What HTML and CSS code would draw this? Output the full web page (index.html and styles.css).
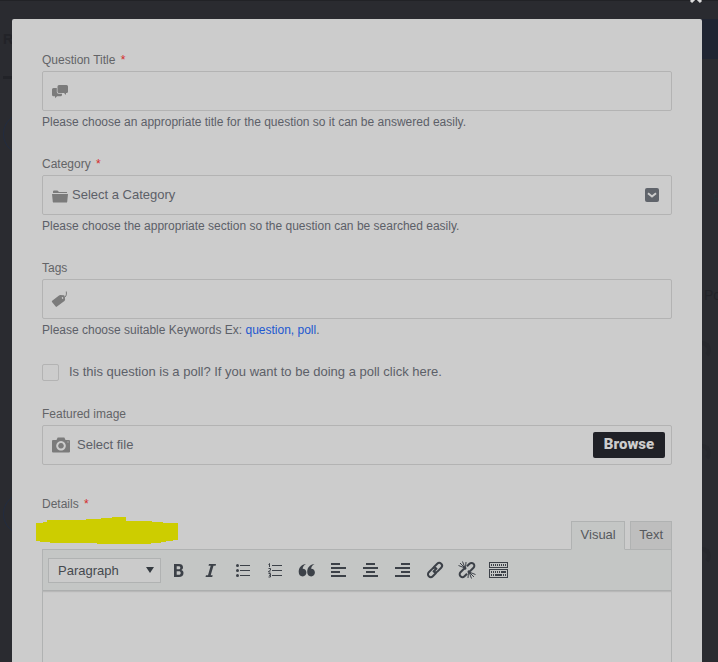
FILE: index.html
```html
<!DOCTYPE html>
<html lang="en">
<head>
<meta charset="utf-8">
<meta name="viewport" content="width=device-width, initial-scale=1">
<title>Ask a question</title>
<link rel="stylesheet" href="styles.css">
</head>
<body>
<div class="backdrop" aria-hidden="true">
  <span class="ghost-heading">R</span>
  <span class="ghost-rule"></span>
  <span class="ghost-avatar ghost-avatar-first"></span>
  <span class="ghost-avatar ghost-avatar-second"></span>
  <span class="ghost-button"></span>
  <span class="ghost-link">E</span>
  <span class="ghost-tab">Po</span>
  <span class="ghost-curve ghost-curve-a"></span>
  <span class="ghost-curve ghost-curve-b"></span>
  <span class="ghost-curve ghost-curve-c"></span>
</div>
<button class="close" type="button" aria-label="Close"><svg width="14" height="14" viewBox="0 0 14 14"><path d="M2 2l10 10M12 2L2 12"/></svg></button>
<main class="modal">
  <form class="form">
    <div class="field">
      <label class="label" for="title">Question Title <span class="required">*</span></label>
      <div class="control">
        <svg class="icon" width="18" height="18" viewBox="0 0 18 18"><path d="M8 3h7.500A1.500 1.500 0 0 1 17 4.500v5a1.500 1.500 0 0 1-1.500 1.500H15v2l-2-2H8a1.500 1.500 0 0 1-1.500-1.500v-5A1.500 1.500 0 0 1 8 3z"/><path d="M1 7.500A1.500 1.500 0 0 1 2.500 6H5.800v4a1.800 1.800 0 0 0 1.800 1.800H11v1a1.500 1.500 0 0 1-1.500 1.500H6L4 16.300v-2H2.500A1.500 1.500 0 0 1 1 12.800z"/></svg>
        <input class="input" id="title" type="text">
      </div>
      <p class="help">Please choose an appropriate title for the question so it can be answered easily.</p>
    </div>
    <div class="field">
      <label class="label" for="category">Category <span class="required">*</span></label>
      <div class="control">
        <svg class="icon" width="18" height="18" viewBox="0 0 18 18"><path d="M2 7V5.500a1 1 0 0 1 1-1h3.500L8 6h8v1zM1 8h16l-.8 8a.8.8 0 0 1-.8.500H2.600a.8.8 0 0 1-.8-.5z"/></svg>
        <select class="input category" id="category"><option>Select a Category</option></select>
        <svg class="chevron" width="14" height="14" viewBox="0 0 14 14"><rect width="14" height="14" rx="2"/><path d="M3 5.200L7 8.500l4-3.300"/></svg>
      </div>
      <p class="help">Please choose the appropriate section so the question can be searched easily.</p>
    </div>
    <div class="field">
      <label class="label" for="tags">Tags</label>
      <div class="control">
        <svg class="icon" width="18" height="18" viewBox="0 0 18 18"><path fill-rule="evenodd" d="M1.200 10.800L8 5.500a2 2 0 0 1 1.200-.4l3.500.2a1 1 0 0 1 .9.800l.5 3.400a2 2 0 0 1-.7 1.500L6 16.600a.9.900 0 0 1-1.300-.1L1 12a.9.900 0 0 1 .2-1.200zM11.600 7a.9.900 0 1 0 .1 0z"/><path class="string" d="M12 8c2.500-.5 4-2.500 3.300-6.500"/></svg>
        <input class="input" id="tags" type="text">
      </div>
      <p class="help">Please choose suitable Keywords Ex: <a href="#">question, poll</a>.</p>
    </div>
    <div class="poll">
      <input class="checkbox" id="poll" type="checkbox">
      <label class="poll-label" for="poll">Is this question is a poll? If you want to be doing a poll click here.</label>
    </div>
    <div class="field field-image">
      <label class="label" for="image">Featured image</label>
      <div class="control">
        <svg class="icon" width="20" height="18" viewBox="0 0 20 18"><path fill-rule="evenodd" d="M2 4h3.500l1.200-2.500h6.600L14.500 4H18a1 1 0 0 1 1 1v10.500a1 1 0 0 1-1 1H2a1 1 0 0 1-1-1V5a1 1 0 0 1 1-1zm8 1a4.800 4.800 0 1 0 .01 0zm0 2a2.800 2.800 0 1 1-.01 0zm6.500-1.500v1h1v-1z"/></svg>
        <label class="file-name" for="image">Select file</label>
        <input class="file-input" id="image" type="file">
        <button class="browse" type="button">Browse</button>
      </div>
    </div>
    <div class="editor">
      <label class="label" for="details">Details <span class="required">*</span></label>
      <svg class="marker" width="142" height="27" viewBox="0 0 142 27" aria-hidden="true"><path d="M0 6h7V5h4V3h39V2h15V1h11V0h14v4h26v1h11v1h15v17h-5v1h-7v1h-5v1h-10v1H61v-1H14v-1H4v-1H0z"/></svg>
      <div class="tabs">
        <button class="tab tab-active" type="button">Visual</button>
        <button class="tab" type="button">Text</button>
      </div>
      <div class="panel">
        <div class="toolbar">
          <div class="format">
            <select class="format-select" aria-label="Format"><option>Paragraph</option></select>
            <svg class="format-arrow" width="8" height="6" viewBox="0 0 8 6"><path d="M0 0h8L4 6z"/></svg>
          </div>
          <div class="tools">
            <button class="tool" type="button" aria-label="Bold"><svg width="20" height="20" viewBox="0 0 20 20"><path fill-rule="evenodd" d="M5 4h5c2.700 0 4 1.200 4 3.300 0 1.300-.6 2.200-1.700 2.700 1.500.4 2.200 1.400 2.200 3 0 2.500-1.700 4-4.500 4H5zm2.700 2.200v3h1.900c1.200 0 1.700-.5 1.700-1.500s-.5-1.500-1.700-1.500zm0 5v3.500h2.200c1.200 0 1.800-.6 1.800-1.800 0-1.100-.6-1.700-1.800-1.700z"/></svg></button>
            <button class="tool" type="button" aria-label="Italic"><svg width="20" height="20" viewBox="0 0 20 20"><path d="M8 4h7l-.4 1.800h-2.100L9.700 15.200h2l-.5 1.800H4.500l.5-1.800h2L9.700 5.800H7.500z"/></svg></button>
            <button class="tool" type="button" aria-label="Bulleted list"><svg width="20" height="20" viewBox="0 0 20 20"><path d="M7 5h10v1H7zm0 5h10v1H7zm0 5h10v1H7z"/><circle cx="4.500" cy="5.500" r="1.500"/><circle cx="4.500" cy="10.500" r="1.500"/><circle cx="4.500" cy="15.500" r="1.500"/></svg></button>
            <button class="tool" type="button" aria-label="Numbered list"><svg width="20" height="20" viewBox="0 0 20 20"><path d="M7 5h10v1H7zm0 5h10v1H7zm0 5h10v1H7z"/><path class="thin" d="M3.500 4.500l1-1V7M3.500 8.500h2v1.700l-2 1.300v.5h2M3.500 13.500h2v1.800H4.300h1.200v1.700h-2"/></svg></button>
            <button class="tool" type="button" aria-label="Blockquote"><svg width="20" height="20" viewBox="0 0 20 20"><path d="M9 4C6.700 5.200 5.700 7 5.700 8.800c2.200 0 3.700 1.500 3.700 3.700 0 2.300-1.600 3.900-3.700 3.900-2.500 0-4-1.800-4-4.700C1.700 7.600 4.600 4.300 9 4zM17.500 4c-2.300 1.200-3.300 3-3.300 4.800 2.200 0 3.700 1.500 3.700 3.700 0 2.300-1.600 3.900-3.700 3.900-2.500 0-4-1.800-4-4.700 0-4.100 2.900-7.400 7.300-7.700z"/></svg></button>
            <button class="tool" type="button" aria-label="Align left"><svg width="20" height="20" viewBox="0 0 20 20"><path d="M2 3h9v2H2zm0 4h15v2H2zm0 4h9v2H2zm0 4h15v2H2z"/></svg></button>
            <button class="tool" type="button" aria-label="Align center"><svg width="20" height="20" viewBox="0 0 20 20"><path d="M5 3h9v2H5zM2 7h15v2H2zm3 4h9v2H5zm-3 4h15v2H2z"/></svg></button>
            <button class="tool" type="button" aria-label="Align right"><svg width="20" height="20" viewBox="0 0 20 20"><path d="M8 3h9v2H8zM2 7h15v2H2zm6 4h9v2H8zm-6 4h15v2H2z"/></svg></button>
            <button class="tool" type="button" aria-label="Insert link"><svg class="stroked" width="20" height="20" viewBox="0 0 20 20"><path d="M8.500 7.500l3.700-3.700a2.800 2.800 0 0 1 4 4l-3.600 3.600a2.800 2.800 0 0 1-3.600.4M11.500 12.500l-3.700 3.700a2.800 2.800 0 0 1-4-4l3.600-3.600a2.800 2.800 0 0 1 3.600-.4M8 12l4-4"/></svg></button>
            <button class="tool" type="button" aria-label="Remove link"><svg class="stroked" width="20" height="20" viewBox="0 0 20 20"><path d="M10 6.300l2.500-2.500a2.800 2.800 0 0 1 4 4l-3 3a2.800 2.800 0 0 1-2.800.5M10 13.700l-2.500 2.500a2.800 2.800 0 0 1-4-4l3-3a2.800 2.800 0 0 1 2.800-.5"/><path class="rays" d="M8 8L1.500 5.500M8 8L3 3M8 8L5.500 1.500M8.500 8L9 2M12 12l6.500 2.500M12 12l5 5M12 12l2.500 6.500M11.500 12l-.5 6"/></svg></button>
            <button class="tool" type="button" aria-label="Toolbar toggle"><svg width="20" height="20" viewBox="0 0 20 20"><path fill-rule="evenodd" d="M0 2h19v6H0zm1 1v4h17V3z"/><path class="keys" d="M2 5h15"/><path fill-rule="evenodd" d="M0 9h19v9H0zm1 1v7h17v-7z"/><path class="keys" d="M2 12h9M2 15h3M14 15h3"/><path d="M12 11h5v2h-5zM6 14h7v2H6z"/></svg></button>
          </div>
        </div>
        <textarea class="details" id="details"></textarea>
      </div>
    </div>
  </form>
</main>
</body>
</html>
```
FILE: styles.css
```css
* {
  box-sizing: border-box;
}

body {
  position: relative;
  height: 100vh;
  margin: 0;
  overflow: hidden;
  background: #2a2b30;
  color: #5c6068;
  font-family: "Liberation Sans", Arial, sans-serif;
  font-size: 12px;
}

button,
input,
select,
textarea {
  margin: 0;
  padding: 0;
  border: 0;
  border-radius: 0;
  background: none;
  color: inherit;
  font: inherit;
}

a {
  color: #2158d0;
  text-decoration: none;
}

/* Dimmed page behind the dialog */
.backdrop {
  position: absolute;
  inset: 0;
  overflow: hidden;
  border-top: 1px solid #212226;
  color: #222328;
  font-size: 14px;
}

.backdrop span {
  position: absolute;
}

.ghost-heading {
  top: 30px;
  left: 3px;
  font-weight: bold;
}

.ghost-rule {
  top: 75px;
  left: 3px;
  width: 40px;
  height: 3px;
  background: #222328;
}

.ghost-avatar {
  left: 3px;
  width: 42px;
  height: 42px;
  border: 1px solid #222b40;
  border-radius: 50%;
}

.ghost-avatar-first {
  top: 112px;
}

.ghost-avatar-second {
  top: 492px;
}

.ghost-button {
  top: 18px;
  right: 0;
  width: 40px;
  height: 40px;
  background: #202532;
}

.ghost-link {
  top: 190px;
  right: -4px;
  color: #243034;
}

.ghost-tab {
  top: 286px;
  right: -3px;
}

.ghost-curve {
  right: 7px;
  width: 18px;
  height: 18px;
  border: 4px solid transparent;
  border-top-color: #27282d;
  border-right-color: #27282d;
  border-radius: 50%;
}

.ghost-curve-a {
  top: 340px;
}

.ghost-curve-b {
  top: 443px;
}

.ghost-curve-c {
  top: 546px;
}

.close {
  position: absolute;
  top: -10px;
  right: 15px;
  height: 14px;
}

.close svg {
  display: block;
  fill: none;
  stroke: #ddd;
  stroke-width: 3;
}

.modal {
  position: relative;
  height: calc(100vh - 19px);
  margin: 19px 16px 0 12px;
  padding: 30px 30px 0;
  overflow: hidden;
  border-radius: 2px 2px 0 0;
  background: #ccc;
}

.form {
  display: flex;
  flex-direction: column;
  height: 100%;
}

.field {
  margin-bottom: 20px;
}

.field-image {
  margin-bottom: 28px;
}

.label {
  display: block;
  color: #636467;
  line-height: 22px;
}

.required {
  margin-left: 2px;
  color: #d52a2a;
}

.control {
  display: flex;
  align-items: center;
  position: relative;
  height: 40px;
  padding: 0 6px 0 8px;
  border: 1px solid #b3b3b3;
  border-radius: 2px;
}

.icon {
  flex: none;
  fill: #7b7b7b;
}

.string {
  fill: none;
  stroke: #7b7b7b;
}

.input {
  flex: 1;
  min-width: 0;
  height: 38px;
  padding: 0 3px 2px;
  outline: 0;
  appearance: none;
  font-size: 13px;
}

.chevron {
  position: absolute;
  right: 12px;
  fill: #60646b;
  pointer-events: none;
}

.chevron path {
  fill: none;
  stroke: #ccc;
  stroke-width: 2;
}

.help {
  margin: 0;
  line-height: 22px;
}

.poll {
  display: flex;
  align-items: center;
  gap: 10px;
  height: 22px;
  margin-bottom: 20px;
  font-size: 13px;
}

.poll-label {
  padding-bottom: 2px;
}

.checkbox {
  width: 17px;
  height: 17px;
  border: 1px solid #b3b3b3;
  border-radius: 2px;
  appearance: none;
}

.file-name {
  flex: 1;
  padding: 0 0 2px 6px;
  font-size: 13px;
}

.file-input {
  position: absolute;
  width: 1px;
  height: 1px;
  opacity: 0;
}

.browse {
  width: 72px;
  height: 26px;
  padding-bottom: 2px;
  border-radius: 2px;
  background: #202127;
  color: #ccc;
  font-family: Roboto, sans-serif;
  font-size: 15px;
  font-weight: 900;
}

.editor {
  display: flex;
  flex: 1;
  flex-direction: column;
  position: relative;
  min-height: 0;
}

.marker {
  position: absolute;
  top: 24px;
  left: -6px;
  fill: #cdcd00;
}

.tabs {
  display: flex;
  justify-content: flex-end;
  gap: 5px;
  position: relative;
  height: 29px;
  margin: 6px 0 -1px;
}

.tab {
  padding: 0 8px 2px;
  border: 1px solid #b0b2b2;
  background: #bebebe;
  color: #56595d;
  font-size: 13px;
}

.tab-active {
  min-width: 54px;
  border-bottom-color: #c4c6c5;
  background: #c4c6c5;
}

.panel {
  display: flex;
  flex: 1;
  flex-direction: column;
  min-height: 0;
  border: 1px solid #b0b2b2;
  border-bottom: 0;
}

.toolbar {
  display: flex;
  flex: none;
  align-items: center;
  gap: 4px;
  height: 41px;
  padding: 0 5px;
  border-bottom: 1px solid #acaeae;
  background: #c4c6c5;
  box-shadow: 0 1px 1px #b8b8b8;
}

.format {
  display: flex;
  align-items: center;
  position: relative;
}

.format-select {
  width: 113px;
  height: 25px;
  padding: 0 9px;
  border: 1px solid #b0b2b2;
  background: #cbcbcb;
  color: #45494e;
  appearance: none;
  font-size: 13px;
}

.format-arrow {
  position: absolute;
  right: 7px;
  fill: #353a40;
  pointer-events: none;
}

.tools {
  display: flex;
  gap: 4px;
}

.tool {
  display: grid;
  place-items: center;
  width: 28px;
  height: 28px;
}

.tool svg {
  fill: #3c4148;
}

.tool .thin {
  fill: none;
  stroke: #3c4148;
}

.tool .stroked {
  fill: none;
  stroke: #3c4148;
  stroke-width: 2;
}

.tool .rays {
  stroke-width: 1;
}

.tool .keys {
  fill: none;
  stroke: #3c4148;
  stroke-width: 2;
  stroke-dasharray: 1 1;
}

.details {
  flex: 1;
  padding: 10px;
  outline: 0;
  resize: none;
}
```
